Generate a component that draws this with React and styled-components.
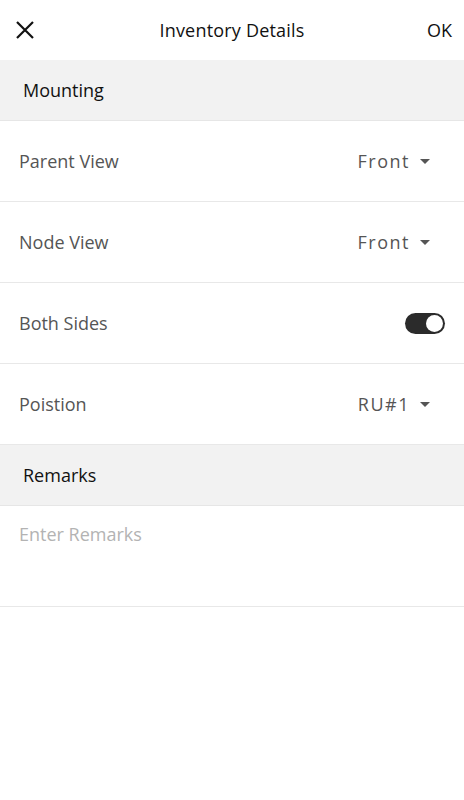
import styled, { createGlobalStyle } from "styled-components";

const Global = createGlobalStyle`
  body {
    margin: 0;
    background: #fff;
    font-family: "Open Sans", "Noto Sans", sans-serif;
  }
`;

const Page = styled.div`
  width: 464px;
  min-height: 800px;
  background: #fff;
`;

const Header = styled.div`
  height: 60px;
  display: grid;
  grid-template-columns: 60px 1fr 60px;
  align-items: center;
`;

const IconButton = styled.button`
  border: none;
  background: none;
  padding: 0 0 0 15px;
  display: flex;
  align-items: center;
  cursor: pointer;
`;

const Title = styled.div`
  text-align: center;
  font-size: 18px;
  letter-spacing: 0.2px;
  color: #111;
`;

const OkButton = styled.button`
  border: none;
  background: none;
  justify-self: end;
  padding: 0 12px 0 0;
  font-family: inherit;
  font-size: 18px;
  color: #111;
  cursor: pointer;
`;

const SectionHead = styled.div`
  height: 60px;
  background: #f2f2f2;
  border-bottom: 1px solid #e6e6e6;
  display: flex;
  align-items: center;
  padding-left: 23px;
  font-size: 18px;
  color: #111;
`;

const Row = styled.div`
  height: 80px;
  border-bottom: 1px solid #e8e8e8;
  display: flex;
  align-items: center;
  justify-content: space-between;
  padding: 0 19px;
`;

const Label = styled.span`
  font-size: 18px;
  color: #555;
`;

const Select = styled.div`
  display: flex;
  align-items: center;
  gap: 10px;
  padding-right: 15px;
  font-size: 18px;
  letter-spacing: 1.5px;
  color: #555;
`;

const Caret = styled.span`
  width: 0;
  height: 0;
  border-left: 5px solid transparent;
  border-right: 5px solid transparent;
  border-top: 5px solid #555;
`;

const Toggle = styled.div`
  width: 40px;
  height: 21px;
  border-radius: 11px;
  background: ${(p) => (p.on ? "#2b2b2b" : "#ccc")};
  position: relative;
  &::after {
    content: "";
    position: absolute;
    top: 2px;
    left: ${(p) => (p.on ? "21px" : "2px")};
    width: 17px;
    height: 17px;
    border-radius: 50%;
    background: #fff;
  }
`;

const Remarks = styled.textarea`
  display: block;
  width: 100%;
  box-sizing: border-box;
  height: 101px;
  border: none;
  border-bottom: 1px solid #e8e8e8;
  padding: 16px 19px;
  resize: none;
  font-family: inherit;
  font-size: 18px;
  color: #555;
  outline: none;
  &::placeholder {
    color: #b3b3b3;
  }
`;

export default function App() {
  return (
    <Page>
      <Global />
      <Header>
        <IconButton>
          <svg width="20" height="20" viewBox="0 0 20 20">
            <path d="M2 2 L18 18 M18 2 L2 18" stroke="#111" strokeWidth="2.2" />
          </svg>
        </IconButton>
        <Title>Inventory Details</Title>
        <OkButton>OK</OkButton>
      </Header>
      <SectionHead>Mounting</SectionHead>
      <Row>
        <Label>Parent View</Label>
        <Select>Front<Caret /></Select>
      </Row>
      <Row>
        <Label>Node View</Label>
        <Select>Front<Caret /></Select>
      </Row>
      <Row>
        <Label>Both Sides</Label>
        <Toggle on />
      </Row>
      <Row>
        <Label>Poistion</Label>
        <Select>RU#1<Caret /></Select>
      </Row>
      <SectionHead>Remarks</SectionHead>
      <Remarks placeholder="Enter Remarks" />
    </Page>
  );
}
